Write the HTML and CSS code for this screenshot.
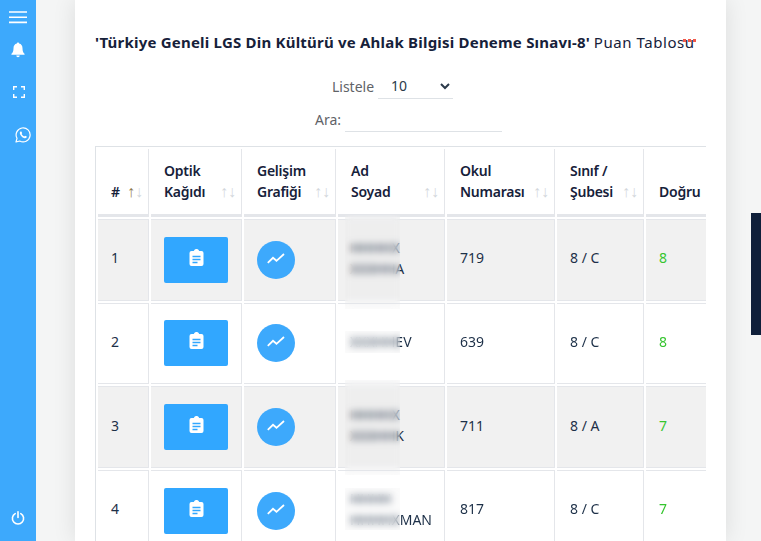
FILE: index.html
```html
<!DOCTYPE html>
<html lang="tr">
<head>
<meta charset="utf-8">
<title>Puan Tablosu</title>
<link rel="stylesheet" href="styles.css">
</head>
<body>
<div class="page">
  <nav class="sidebar">
    <div class="side-top">
      <svg class="ic burger" width="18" height="13" viewBox="0 0 18 13"><path d="M0 1h18M0 6.200h18M0 11.400h18" stroke="#fff" stroke-width="1.600"/></svg>
      <svg class="ic bell" width="14" height="16" viewBox="0 0 14 16"><path d="M7 0.500c-.7 0-1.100.5-1.100 1.100C3.600 2.100 2.500 4 2.500 6.200c0 3-.8 4.400-2 5.600-.3.4-.1 1 .5 1h12c.6 0 .8-.6.5-1-1.200-1.200-2-2.600-2-5.600 0-2.200-1.100-4.100-3.400-4.600C8.100 1 7.700.5 7 .5zM5.300 13.600c0 .9.8 1.700 1.700 1.700s1.700-.8 1.700-1.700z" fill="#fff"/></svg>
      <svg class="ic full" width="12" height="12" viewBox="0 0 12 12"><path d="M.7 4V.7H4M8 .7h3.300V4M11.300 8v3.300H8M4 11.300H.7V8" fill="none" stroke="#fff" stroke-width="1.400"/></svg>
      <svg class="ic wa" width="16" height="16" viewBox="0 0 16 16"><path d="M1 15l1-3.700A7 7 0 1 1 4.700 14z" fill="none" stroke="#fff" stroke-width="1.200" stroke-linejoin="round"/><path d="M5.500 4.500c-.8.600-.9 1.700-.3 3 .7 1.500 2 2.900 3.700 3.600 1.300.5 2.200.2 2.700-.6l.2-.9-1.800-.9-.8.900c-1-.4-2-1.300-2.600-2.500l.6-.8-.8-1.900z" fill="#fff"/></svg>
    </div>
    <svg class="ic power" width="14" height="14" viewBox="0 0 14 14"><path d="M4.200 2.600a5.600 5.600 0 1 0 5.600 0M7 .8v5.700" fill="none" stroke="#fff" stroke-width="1.600" stroke-linecap="round"/></svg>
  </nav>
  <main class="content">
    <section class="card">
      <h1 class="title"><b>'Türkiye Geneli LGS Din Kültürü ve Ahlak Bilgisi Deneme Sınavı-8'</b> <span class="title-rest">Puan Tablosu</span><span class="red-mark"></span></h1>
      <div class="filter filter-len">
        <label class="lbl">Listele</label>
        <select class="sel"><option>10</option></select>
      </div>
      <div class="filter filter-search">
        <label class="lbl">Ara:</label>
        <span class="inp"></span>
      </div>
      <div class="table-wrap">
        <table class="tbl">
          <colgroup>
            <col class="c1"><col class="c2"><col class="c3"><col class="c4"><col class="c5"><col class="c6"><col class="c7">
          </colgroup>
          <thead>
            <tr>
              <th><div class="th-in"><span>#</span><span class="sort sort-on"><i>↑</i><i>↓</i></span></div></th>
              <th><div class="th-in"><span>Optik<br>Kağıdı</span><span class="sort"><i>↑</i><i>↓</i></span></div></th>
              <th><div class="th-in"><span>Gelişim<br>Grafiği</span><span class="sort"><i>↑</i><i>↓</i></span></div></th>
              <th><div class="th-in"><span>Ad<br>Soyad</span><span class="sort"><i>↑</i><i>↓</i></span></div></th>
              <th><div class="th-in"><span>Okul<br>Numarası</span><span class="sort"><i>↑</i><i>↓</i></span></div></th>
              <th><div class="th-in"><span>Sınıf /<br>Şubesi</span><span class="sort"><i>↑</i><i>↓</i></span></div></th>
              <th><div class="th-in"><span>Doğru</span></div></th>
            </tr>
          </thead>
          <tbody>
            <tr class="odd">
              <td>1</td>
              <td class="cell-btn"><span class="btn-opt"><svg width="15" height="17" viewBox="0 0 14 17"><path d="M2 2h2.300a2.800 2.800 0 0 1 5.400 0H12a2 2 0 0 1 2 2v11a2 2 0 0 1-2 2H2a2 2 0 0 1-2-2V4a2 2 0 0 1 2-2z" fill="#fff"/><path d="M3 7.500h8M3 10.500h8M3 13.500h5" stroke="#31a7ff" stroke-width="1.300"/></svg></span></td>
              <td class="cell-btn"><span class="btn-chart"><svg width="18" height="11" viewBox="0 0 18 11"><path d="M.8 9.800 6 4.800l3.500 3L17 1" fill="none" stroke="#fff" stroke-width="1.800"/></svg></span></td>
              <td class="name-cell">HHHHX<br>XXXHHA<span class="blur blur-a"></span></td>
              <td>719</td><td>8 / C</td><td class="ok">8</td>
            </tr>
            <tr>
              <td>2</td>
              <td class="cell-btn"><span class="btn-opt"><svg width="15" height="17" viewBox="0 0 14 17"><path d="M2 2h2.300a2.800 2.800 0 0 1 5.400 0H12a2 2 0 0 1 2 2v11a2 2 0 0 1-2 2H2a2 2 0 0 1-2-2V4a2 2 0 0 1 2-2z" fill="#fff"/><path d="M3 7.500h8M3 10.500h8M3 13.500h5" stroke="#31a7ff" stroke-width="1.300"/></svg></span></td>
              <td class="cell-btn"><span class="btn-chart"><svg width="18" height="11" viewBox="0 0 18 11"><path d="M.8 9.800 6 4.800l3.500 3L17 1" fill="none" stroke="#fff" stroke-width="1.800"/></svg></span></td>
              <td class="name-cell">XXXHHEV<span class="blur blur-b"></span></td>
              <td>639</td><td>8 / C</td><td class="ok">8</td>
            </tr>
            <tr class="odd">
              <td>3</td>
              <td class="cell-btn"><span class="btn-opt"><svg width="15" height="17" viewBox="0 0 14 17"><path d="M2 2h2.300a2.800 2.800 0 0 1 5.400 0H12a2 2 0 0 1 2 2v11a2 2 0 0 1-2 2H2a2 2 0 0 1-2-2V4a2 2 0 0 1 2-2z" fill="#fff"/><path d="M3 7.500h8M3 10.500h8M3 13.500h5" stroke="#31a7ff" stroke-width="1.300"/></svg></span></td>
              <td class="cell-btn"><span class="btn-chart"><svg width="18" height="11" viewBox="0 0 18 11"><path d="M.8 9.800 6 4.800l3.500 3L17 1" fill="none" stroke="#fff" stroke-width="1.800"/></svg></span></td>
              <td class="name-cell">HHHHX<br>XXXHHK<span class="blur blur-d"></span></td>
              <td>711</td><td>8 / A</td><td class="ok">7</td>
            </tr>
            <tr>
              <td>4</td>
              <td class="cell-btn"><span class="btn-opt"><svg width="15" height="17" viewBox="0 0 14 17"><path d="M2 2h2.300a2.800 2.800 0 0 1 5.400 0H12a2 2 0 0 1 2 2v11a2 2 0 0 1-2 2H2a2 2 0 0 1-2-2V4a2 2 0 0 1 2-2z" fill="#fff"/><path d="M3 7.500h8M3 10.500h8M3 13.500h5" stroke="#31a7ff" stroke-width="1.300"/></svg></span></td>
              <td class="cell-btn"><span class="btn-chart"><svg width="18" height="11" viewBox="0 0 18 11"><path d="M.8 9.800 6 4.800l3.500 3L17 1" fill="none" stroke="#fff" stroke-width="1.800"/></svg></span></td>
              <td class="name-cell">HHHH<br>HHHHXMAN<span class="blur blur-c"></span></td>
              <td>817</td><td>8 / C</td><td class="ok">7</td>
            </tr>
          </tbody>
        </table>
      </div>
    </section>
    <div class="side-block"></div>
  </main>
</div>
</body>
</html>
```
FILE: styles.css
```css
* { box-sizing: border-box; }
html, body { margin: 0; height: 100%; overflow: hidden; }
body { font-family: "Noto Sans", "Open Sans", sans-serif; color: #0f2036; background: #f4f5f5; }
.page { display: flex; height: 541px; width: 761px; overflow: hidden; }
.sidebar { width: 36px; flex: none; background: #3da9fc; display: flex; flex-direction: column; justify-content: space-between; align-items: center; padding: 11px 0 16px; }
.side-top { display: flex; flex-direction: column; align-items: center; }
.ic { display: block; }
.burger { margin-bottom: 18px; }
.bell { margin-bottom: 28px; }
.full { margin-bottom: 29px; margin-left: 1px; }
.wa { margin-left: 9px; }
.content { flex: 1; position: relative; padding: 0 35px 0 39px; }
.card { width: 651px; height: 541px; background: #fff; padding: 33px 20px 0; box-shadow: 0 0 22px rgba(0, 0, 0, .1); overflow: hidden; }
.title { margin: 0; font-size: 15px; font-weight: 400; line-height: 18px; color: #16213a; white-space: nowrap; position: relative; }
.title b { font-weight: 700; letter-spacing: .21px; }
.title-rest { letter-spacing: .55px; }
.red-mark { position: absolute; left: 588px; top: 6px; width: 13px; border-top: 3px dotted #f0584a; }
.filter { display: flex; align-items: center; justify-content: center; }
.filter-len { margin-top: 22px; height: 26px; padding-right: 16px; }
.filter-search { margin-top: 7px; height: 26px; padding-left: 16px; }
.lbl { font-size: 14px; color: #5f6368; margin-right: 4px; }
.sel { width: 75px; height: 26px; font: 14px "Noto Sans", sans-serif; color: #2b3a4a; border: 0; border-bottom: 1px solid #dee2e6; background: #fff; padding-left: 9px; outline: 0; }
.inp { width: 157px; height: 26px; border-bottom: 1px solid #dee2e6; display: block; }
.table-wrap { margin-top: 14px; width: 611px; overflow: hidden; }
.tbl { table-layout: fixed; width: 613px; border-collapse: separate; border-spacing: 2px; border: 1px solid #dee2e6; border-width: 1px 0 0 1px; font-size: 14px; }
.c1 { width: 51px; } .c2 { width: 91px; } .c3 { width: 92px; } .c4 { width: 107px; } .c5 { width: 108px; } .c6 { width: 87px; } .c7 { width: 60px; }
th { height: 68px; padding: 0 0 12px 13px; text-align: left; vertical-align: bottom; font-weight: 600; letter-spacing: -.25px; color: #16213a; line-height: 21px; border: 1px solid #e4e6ea; border-width: 0 1px 3px 0; }
th:last-child { border-right: 0; }
.th-in { display: flex; align-items: flex-end; justify-content: space-between; padding-right: 5px; }
.sort { display: flex; font-family: "Liberation Sans", sans-serif; font-size: 16px; font-weight: 400; color: #d3d7dc; line-height: 20px; letter-spacing: 0; }
.sort i { font-style: normal; display: flex; justify-content: center; width: 8px; }
.sort-on i:first-child { color: #8f7a50; }
td { height: 81.67px; padding: 0 0 4px 13px; vertical-align: middle; border: 1px solid #e4e6ea; border-width: 1px 1px 1px 0; color: #1d3048; line-height: 21px; position: relative; }
td:last-child { border-right: 0; }
.cell-btn { padding-bottom: 0; }
.odd td { background: #f1f1f1; }
.ok { color: #36c52f; }
.btn-opt { display: flex; width: 64px; height: 46px; border-radius: 2px; background: #31a7ff; align-items: center; justify-content: center; padding-bottom: 5px; }
.btn-chart { display: flex; width: 38px; height: 38px; border-radius: 50%; background: #3da9fc; align-items: center; justify-content: center; padding-bottom: 3px; }
.name-cell { padding-left: 12px; }
.blur { position: absolute; left: 7px; width: 55px; backdrop-filter: blur(3.500px); background: rgba(225, 225, 225, .12); }
.blur-a { top: -5px; height: 94px; }
.blur-b { top: 27px; height: 22px; }
.blur-c { top: 17px; height: 42px; }
.blur-d { top: -7px; height: 95px; }
.side-block { position: absolute; right: 0; top: 213px; width: 10px; height: 122px; background: #0f1f3a; }
```
